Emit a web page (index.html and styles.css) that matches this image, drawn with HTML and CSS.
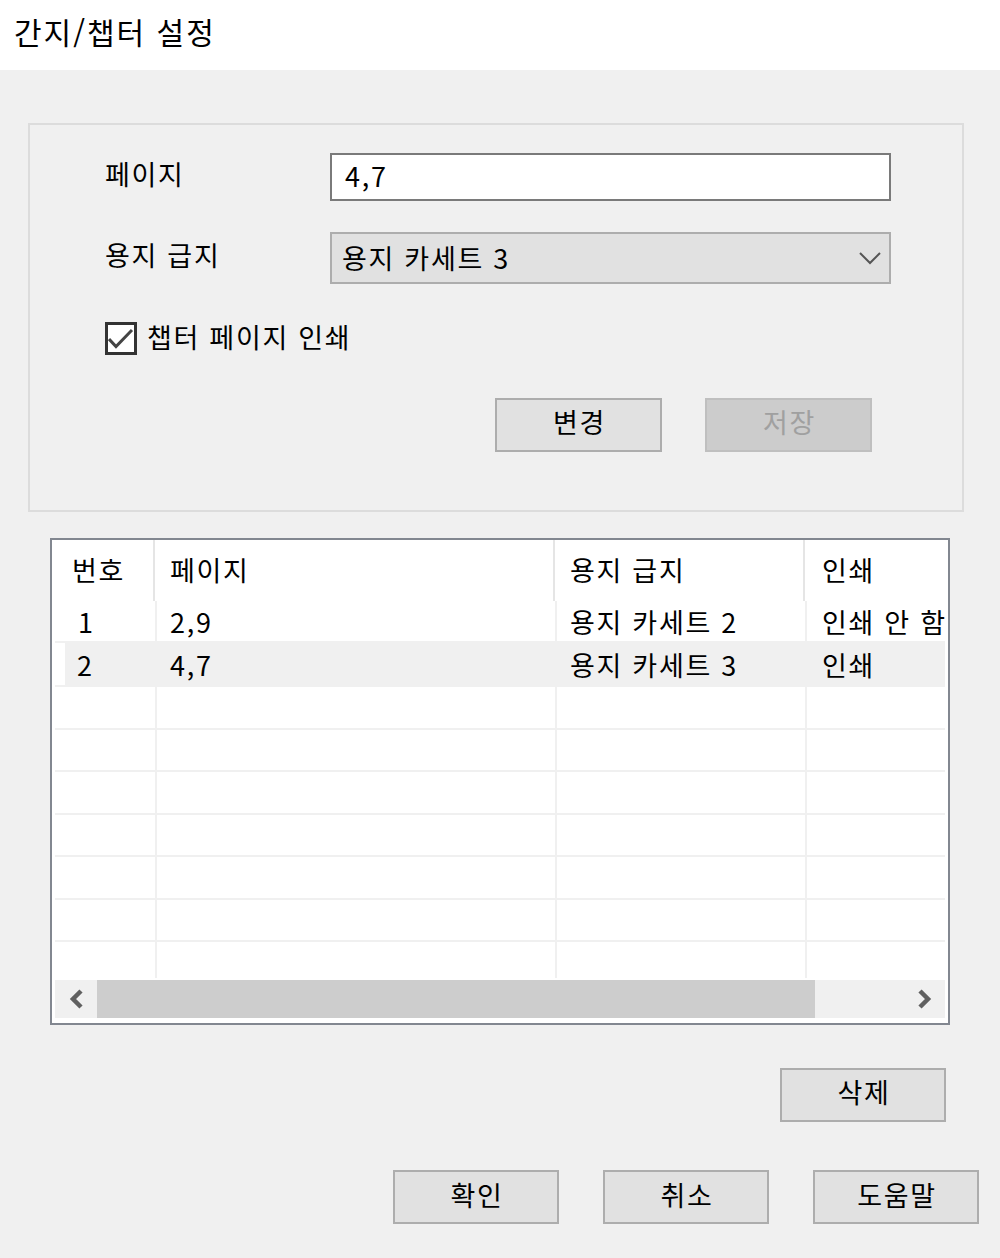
FILE: index.html
```html
<!DOCTYPE html>
<html lang="ko">
<head>
<meta charset="utf-8">
<title>간지/챕터 설정</title>
<link rel="stylesheet" href="styles.css">
</head>
<body>
<div class="titlebar"><span class="title">간지/챕터 설정</span></div>
<main class="dialog">
  <section class="group">
    <div class="form-row row-page">
      <span class="label">페이지</span>
      <div class="textbox"><span class="txt">4,7</span></div>
    </div>
    <div class="form-row row-tray">
      <span class="label">용지 급지</span>
      <div class="combo">
        <span class="txt">용지 카세트 3</span>
        <svg class="combo-arrow" width="22" height="14" viewBox="0 0 22 14"><polyline points="1,2 11,12 21,2" fill="none" stroke="#555" stroke-width="2"/></svg>
      </div>
    </div>
    <div class="check-row">
      <span class="checkbox"><svg width="26" height="27" viewBox="0 0 26 27"><polyline points="1,14 8,21.5 24,5" fill="none" stroke="#444" stroke-width="3"/></svg></span>
      <span class="check-label">챕터 페이지 인쇄</span>
    </div>
    <div class="group-buttons">
      <button class="btn">변경</button>
      <button class="btn disabled">저장</button>
    </div>
  </section>

  <section class="listview">
    <div class="lv-body">
      <div class="lv-header">
        <div class="hcell c1">번호</div>
        <div class="hcell c2">페이지</div>
        <div class="hcell c3">용지 급지</div>
        <div class="hcell c4">인쇄</div>
      </div>
      <div class="lv-row h42">
        <div class="cell c1 n1">1</div>
        <div class="cell c2">2,9</div>
        <div class="cell c3">용지 카세트 2</div>
        <div class="cell c4">인쇄 안 함</div>
      </div>
      <div class="lv-row h44 selected">
        <div class="cell c1">2</div>
        <div class="cell c2">4,7</div>
        <div class="cell c3">용지 카세트 3</div>
        <div class="cell c4">인쇄</div>
      </div>
      <div class="lv-row h43"><div class="cell c1"></div><div class="cell c2"></div><div class="cell c3"></div><div class="cell c4"></div></div>
      <div class="lv-row h42"><div class="cell c1"></div><div class="cell c2"></div><div class="cell c3"></div><div class="cell c4"></div></div>
      <div class="lv-row h43"><div class="cell c1"></div><div class="cell c2"></div><div class="cell c3"></div><div class="cell c4"></div></div>
      <div class="lv-row h42"><div class="cell c1"></div><div class="cell c2"></div><div class="cell c3"></div><div class="cell c4"></div></div>
      <div class="lv-row h43"><div class="cell c1"></div><div class="cell c2"></div><div class="cell c3"></div><div class="cell c4"></div></div>
      <div class="lv-row h42"><div class="cell c1"></div><div class="cell c2"></div><div class="cell c3"></div><div class="cell c4"></div></div>
      <div class="lv-row last"><div class="cell c1"></div><div class="cell c2"></div><div class="cell c3"></div><div class="cell c4"></div></div>
    </div>
    <div class="lv-scroll">
      <div class="sb-btn"><svg width="42" height="38" viewBox="0 0 42 38"><polyline points="26,11 18,19 26,27" fill="none" stroke="#606060" stroke-width="4.5"/></svg></div>
      <div class="sb-thumb"></div>
      <div class="sb-track"></div>
      <div class="sb-btn"><svg width="42" height="38" viewBox="0 0 42 38"><polyline points="17,11 25,19 17,27" fill="none" stroke="#606060" stroke-width="4.5"/></svg></div>
    </div>
  </section>

  <div class="delete-row">
    <button class="btn">삭제</button>
  </div>
  <div class="footer">
    <button class="btn">확인</button>
    <button class="btn">취소</button>
    <button class="btn">도움말</button>
  </div>
</main>
</body>
</html>
```

FILE: styles.css
```css
* { box-sizing: border-box; }
html, body { margin: 0; padding: 0; }
body {
  width: 1000px;
  height: 1258px;
  background: #f0f0f0;
  font-family: "Noto Sans CJK KR", "Noto Sans", sans-serif;
  font-size: 27px;
  letter-spacing: 1.7px;
  line-height: 1;
  color: #000;
  overflow: hidden;
}
.titlebar {
  height: 70px;
  background: #fff;
  display: flex;
  align-items: center;
  padding: 0 0 8px 14px;
}
.title { font-size: 30px; line-height: 1; letter-spacing: 2px; }

.dialog { display: flex; flex-direction: column; }

/* group box */
.group {
  margin: 53px 0 0 28px;
  width: 936px;
  height: 389px;
  border: 2px solid #dcdcdc;
  padding: 28px 0 0 75px;
}
.form-row { display: flex; align-items: center; }
.row-page { height: 48px; }
.row-tray { height: 52px; margin-top: 31px; }
.label { width: 225px; margin-bottom: 8px; }
.textbox {
  width: 561px;
  height: 48px;
  border: 2px solid #7a7a7a;
  background: #fff;
  display: flex;
  align-items: center;
  padding: 0 0 3px 13px;
}
.combo {
  width: 561px;
  height: 52px;
  border: 2px solid #adadad;
  background: #e1e1e1;
  display: flex;
  align-items: center;
  justify-content: space-between;
  padding: 0 8px 2px 10px;
}
.combo-arrow { margin-top: 2px; }
.check-row {
  margin-top: 38px;
  height: 33px;
  display: flex;
  align-items: center;
}
.checkbox {
  width: 32px;
  height: 33px;
  border: 3px solid #333;
  background: #fff;
  display: flex;
}
.check-label { margin-left: 10px; margin-bottom: 4px; }
.group-buttons {
  margin-top: 43px;
  padding-left: 390px;
  display: flex;
  gap: 43px;
}

.btn {
  width: 167px;
  height: 54px;
  border: 2px solid #adadad;
  background: #e1e1e1;
  font: inherit;
  letter-spacing: inherit;
  color: #000;
  padding: 0 0 8px 2px;
  margin: 0;
  display: flex;
  align-items: center;
  justify-content: center;
}
.btn.disabled {
  background: #cccccc;
  border-color: #bfbfbf;
  color: #a0a0a0;
}

/* list view */
.listview {
  margin: 26px 0 0 50px;
  width: 900px;
  height: 487px;
  border: 2px solid #828790;
  background: #fff;
  display: flex;
  flex-direction: column;
}
.lv-body {
  width: 893px;
  height: 438px;
  overflow: hidden;
  flex: none;
}
.lv-header {
  height: 61px;
  display: flex;
  width: 1100px;
}
.hcell {
  flex: none;
  display: flex;
  align-items: center;
  padding-bottom: 2px;
  border-right: 2px solid #e5e5e5;
}
.hcell.c1 { width: 103px; padding-left: 20px; }
.hcell.c2 { width: 400px; padding-left: 15px; }
.hcell.c3 { width: 250px; padding-left: 15px; }
.hcell.c4 { width: 250px; padding-left: 17px; border-right: none; }

.lv-row {
  margin-left: 3px;
  width: 1100px;
  display: flex;
  border-bottom: 2px solid #f0f0f0;
}
.lv-row.h42 { height: 42px; }
.lv-row.h43 { height: 43px; }
.lv-row.h44 { height: 44px; }
.lv-row.last { height: 36px; border-bottom: none; }
.lv-row.selected {
  background: linear-gradient(to right, #fff 0, #fff 10px, #f0f0f0 10px);
}
.cell {
  flex: none;
  display: flex;
  align-items: center;
  white-space: nowrap;
  border-right: 2px solid #f0f0f0;
}
.cell.c1 { width: 102px; padding-left: 22px; }
.cell.n1 { padding-left: 23px; }
.cell.c2 { width: 400px; padding-left: 13px; }
.cell.c3 { width: 250px; padding-left: 13px; }
.cell.c4 { width: 250px; padding-left: 15px; }

.lv-scroll {
  margin: 2px 0 0 3px;
  width: 890px;
  height: 38px;
  display: flex;
  background: #f0f0f0;
  flex: none;
}
.sb-btn { width: 42px; height: 38px; flex: none; display: flex; }
.sb-thumb { width: 718px; height: 38px; background: #cdcdcd; flex: none; }
.sb-track { flex: 1; }

.delete-row {
  margin-top: 43px;
  display: flex;
  justify-content: flex-end;
  padding-right: 54px;
}
.delete-row .btn { width: 166px; }
.footer {
  margin-top: 48px;
  display: flex;
  justify-content: flex-end;
  padding-right: 21px;
  gap: 44px;
}
.footer .btn { width: 166px; padding-bottom: 6px; }
```
